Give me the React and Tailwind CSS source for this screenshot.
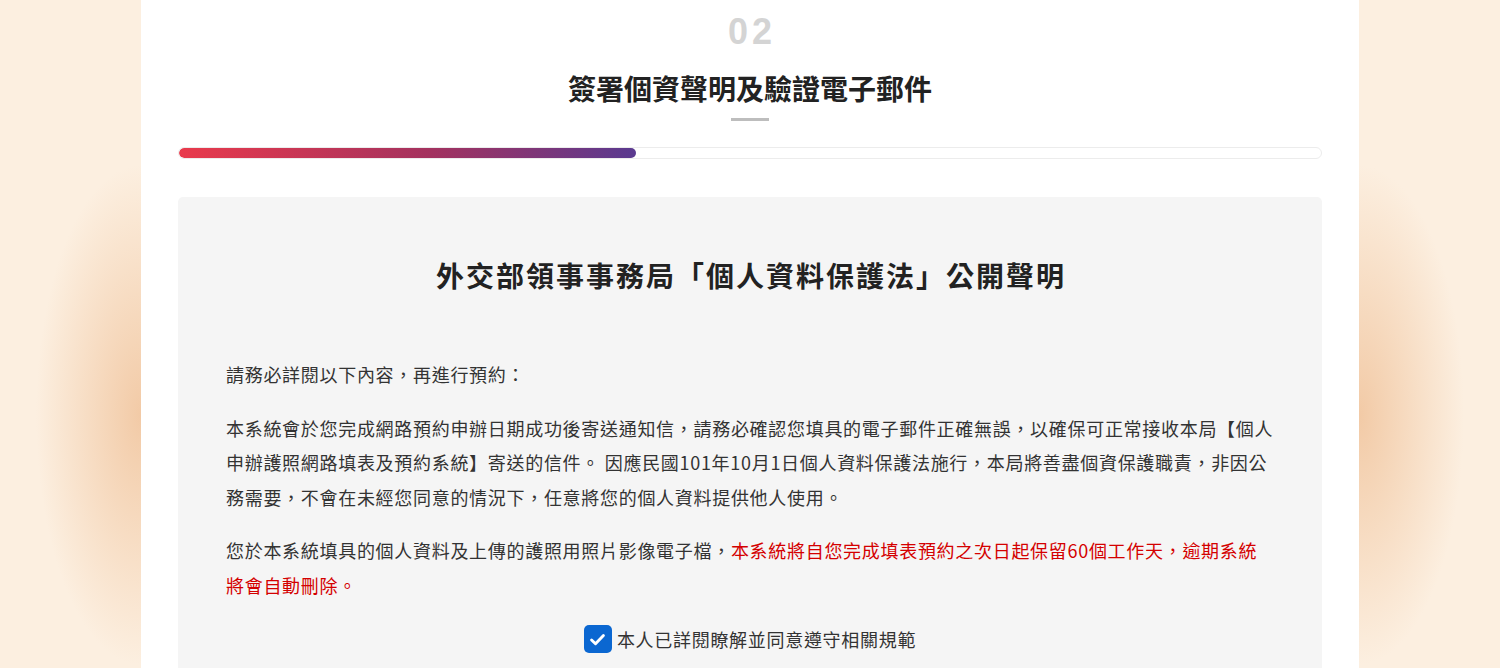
export default function App() {
  return (
    <div className="min-h-[668px] w-full overflow-hidden flex justify-center bg-[#fcefe0] bg-[image:radial-gradient(ellipse_105px_250px_at_141px_415px,#f2caa6,rgba(252,239,224,0)),radial-gradient(ellipse_105px_250px_at_1359px_415px,#f2caa6,rgba(252,239,224,0))] [font-family:'Noto_Sans_CJK_TC',sans-serif]">
      <div className="w-[1218px] bg-white px-[37px] pt-[14px] pb-10 flex flex-col items-center">
        <div className="text-[36px] leading-none font-bold tracking-[4px] pl-[4px] text-[#d4d4d4] [font-family:'Liberation_Sans',Arial,sans-serif]">
          02
        </div>
        <h1 className="mt-[18px] text-[28px] leading-[40px] font-bold text-[#222]">
          簽署個資聲明及驗證電子郵件
        </h1>
        <div className="mt-[10px] w-[38px] h-[3px] bg-[#bdbdbd]" />
        <div className="mt-[26px] w-full h-[12px] rounded-full border border-[#ececec] bg-white overflow-hidden">
          <div className="h-full w-[40%] rounded-full bg-[linear-gradient(to_right,#e93a4c,#a3325f_55%,#5a3a90)]" />
        </div>
        <div className="mt-[38px] w-full rounded-[5px] bg-[#f5f5f5] pt-[57px] pb-10 px-[48px]">
          <h2 className="text-center text-[28px] leading-[42px] font-bold tracking-[2px] pl-[2px] text-[#222]">
            外交部領事事務局「個人資料保護法」公開聲明
          </h2>
          <div className="mt-[61px] text-[18px] leading-[34.5px] tracking-[0.7px] text-[#333]">
            <p className="mb-[19px]">請務必詳閱以下內容，再進行預約：</p>
            <p className="mb-[19px]">
              本系統會於您完成網路預約申辦日期成功後寄送通知信，請務必確認您填具的電子郵件正確無誤，以確保可正常接收本局【個人申辦護照網路填表及預約系統】寄送的信件。 因應民國101年10月1日個人資料保護法施行，本局將善盡個資保護職責，非因公務需要，不會在未經您同意的情況下，任意將您的個人資料提供他人使用。
            </p>
            <p className="mb-[20px]">
              您於本系統填具的個人資料及上傳的護照用照片影像電子檔，
              <span className="text-[#d40000]">
                本系統將自您完成填表預約之次日起保留60個工作天，逾期系統將會自動刪除。
              </span>
            </p>
            <label className="flex items-center justify-center gap-[5px]">
              <span className="w-[28px] h-[28px] rounded-[5px] bg-[#0b67d1] flex items-center justify-center">
                <svg viewBox="0 0 24 24" className="w-[19px] h-[19px]" fill="none" stroke="white" strokeWidth="3.6" strokeLinecap="round" strokeLinejoin="round">
                  <path d="M4.5 12.5l5 5L19.5 7" />
                </svg>
              </span>
              <span>本人已詳閱瞭解並同意遵守相關規範</span>
            </label>
          </div>
        </div>
      </div>
    </div>
  );
}
